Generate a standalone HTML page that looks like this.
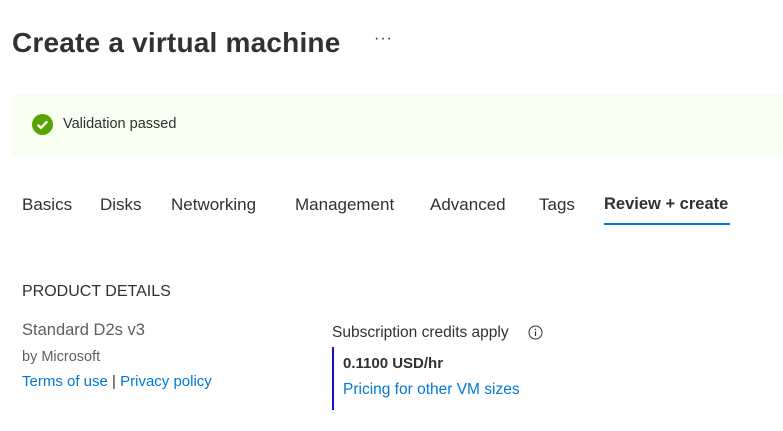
<!DOCTYPE html>
<html><head><meta charset="utf-8"><style>
body{margin:0;width:783px;height:431px;background:#fff;font-family:"Liberation Sans",sans-serif;color:#323130;position:relative;overflow:hidden}
.a{position:absolute;white-space:nowrap}
h1{position:absolute;left:12px;top:27px;margin:0;font-size:28px;font-weight:600;color:#323130;letter-spacing:0.2px}
.banner{position:absolute;left:12px;top:94px;width:771px;height:62px;background:#f8fff0}
.tab{position:absolute;top:195px;font-size:17px;color:#323130}
a{color:#0078d4;text-decoration:none}
</style></head><body>
<h1>Create a virtual machine</h1>
<div class="a" style="left:374px;top:30px;font-size:16px;letter-spacing:1px">···</div>
<div class="banner"></div>
<svg class="a" style="left:32px;top:114px" width="21" height="21" viewBox="0 0 20 20"><circle cx="10" cy="10" r="10" fill="#57a300"/><path d="M5.5 10.3l3 3 6-6.2" stroke="#fff" stroke-width="2.2" fill="none"/></svg>
<div class="a" style="left:63px;top:116px;font-size:14.5px">Validation passed</div>
<div class="tab" style="left:22px">Basics</div>
<div class="tab" style="left:100px">Disks</div>
<div class="tab" style="left:171px">Networking</div>
<div class="tab" style="left:295px">Management</div>
<div class="tab" style="left:430px">Advanced</div>
<div class="tab" style="left:539px">Tags</div>
<div class="tab" style="left:604px;font-weight:600;font-size:16.5px">Review + create</div>
<div class="a" style="left:604px;top:223px;width:126px;height:2px;background:#0078d4"></div>
<div class="a" style="left:22px;top:283px;font-size:16px">PRODUCT DETAILS</div>
<div class="a" style="left:22px;top:321px;font-size:16.5px;color:#605e5c">Standard D2s v3</div>
<div class="a" style="left:22px;top:349px;font-size:14.5px;color:#605e5c">by Microsoft</div>
<div class="a" style="left:22px;top:373px;font-size:15px"><a>Terms of use</a> | <a>Privacy policy</a></div>
<div class="a" style="left:332px;top:324px;font-size:15.5px">Subscription credits apply</div>
<svg class="a" style="left:528px;top:325px" width="15" height="15" viewBox="0 0 15 15"><circle cx="7.5" cy="7.5" r="6.5" stroke="#323130" fill="none"/><path d="M7.5 6.5v4.5" stroke="#323130" stroke-width="1.2"/><circle cx="7.5" cy="4.4" r=".8" fill="#323130"/></svg>
<div class="a" style="left:332px;top:347px;width:2px;height:63px;background:#1010c8"></div>
<div class="a" style="left:343px;top:355px;font-size:15px;font-weight:700">0.1100 USD/hr</div>
<div class="a" style="left:343px;top:381px;font-size:15.5px"><a>Pricing for other VM sizes</a></div>
</body></html>
